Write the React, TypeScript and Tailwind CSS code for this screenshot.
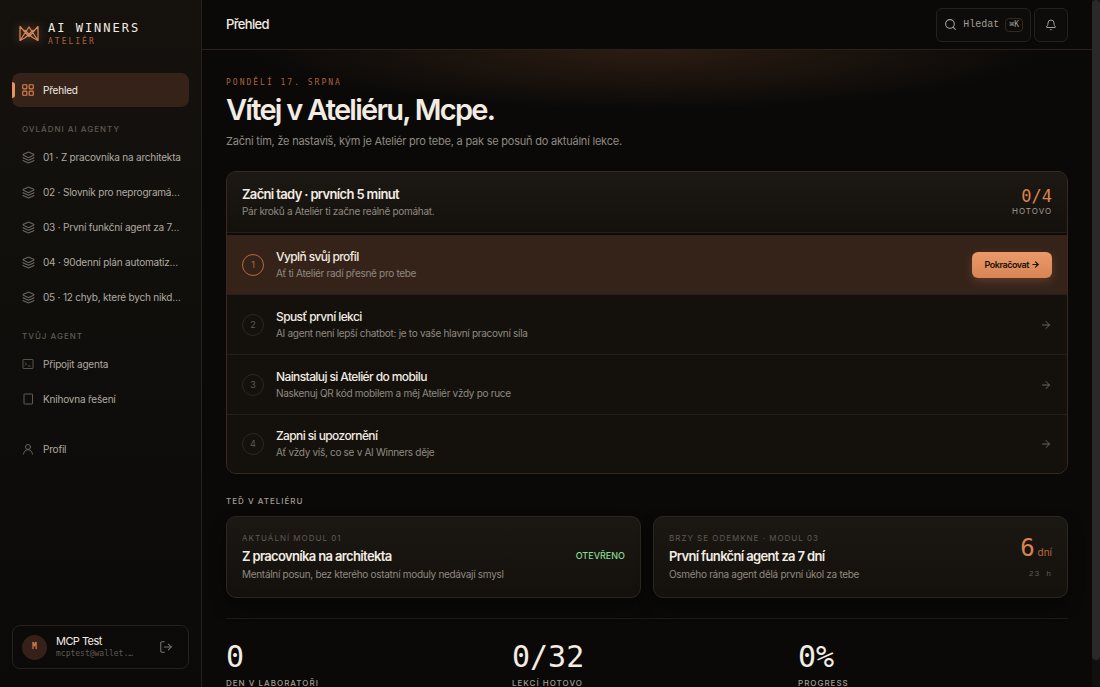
import React from "react";
import { ArrowRight, Bell, Layers, LayoutGrid, LogOut, Search } from "lucide-react";

const MONO = "font-['DejaVu_Sans_Mono',monospace]";

interface NavItemProps {
  label: string;
  icon: React.ReactNode;
  active?: boolean;
}

interface Step {
  title: string;
  text: string;
}

const modules = [
  "01 · Z pracovníka na architekta",
  "02 · Slovník pro neprogramá…",
  "03 · První funkční agent za 7…",
  "04 · 90denní plán automatiz…",
  "05 · 12 chyb, které bych nikd…",
];

const steps: Step[] = [
  { title: "Vyplň svůj profil", text: "Ať ti Ateliér radí přesně pro tebe" },
  { title: "Spusť první lekci", text: "AI agent není lepší chatbot: je to vaše hlavní pracovní síla" },
  { title: "Nainstaluj si Ateliér do mobilu", text: "Naskenuj QR kód mobilem a měj Ateliér vždy po ruce" },
  { title: "Zapni si upozornění", text: "Ať vždy víš, co se v AI Winners děje" },
];

const stats = [
  { value: "0", label: "Den v laboratoři" },
  { value: "0/32", label: "Lekcí hotovo" },
  { value: "0%", label: "Progress" },
];

function Logo() {
  return (
    <svg
      viewBox="0 0 20 18"
      className="h-[18px] w-5 shrink-0 drop-shadow-[0_0_5px_rgba(224,138,90,0.5)]"
      fill="none"
      stroke="#d98a5c"
      strokeWidth="1.2"
      strokeLinejoin="round"
    >
      <path d="M1 1.500 V15.500 L10 2 L19 15.500 V1.500 L10 11.500 Z" />
      <path d="M1 15.500 L6.500 12.500 L14.500 5 M19 15.500 L13.500 12.500 L5.500 5" />
    </svg>
  );
}

function TerminalIcon() {
  return (
    <svg viewBox="0 0 24 24" className="size-3" fill="none" stroke="currentColor" strokeWidth="1.6">
      <rect x="2" y="3" width="20" height="18" rx="1" />
      <path d="M6 9l3 3-3 3M12 16h5" />
    </svg>
  );
}

function BookIcon() {
  return (
    <svg viewBox="0 0 24 24" className="size-3" fill="none" stroke="currentColor" strokeWidth="1.8">
      <rect x="4" y="2" width="17" height="20" rx="1" />
    </svg>
  );
}

function PersonIcon() {
  return (
    <svg viewBox="0 0 24 24" className="size-3" fill="none" stroke="currentColor" strokeWidth="2" strokeLinecap="round">
      <circle cx="12" cy="8" r="5" />
      <path d="M3 22c1-5 4-8.500 9-8.500s8 3.500 9 8.500" />
    </svg>
  );
}

function NavItem({ label, icon, active }: NavItemProps) {
  return (
    <a
      href="#"
      className={`relative flex h-[34px] items-center gap-2 rounded-lg px-[9px] ${
        active ? "bg-[#35231a] text-[#f3ece2]" : "text-[#b0aaa1]"
      }`}
    >
      {active && <span className="absolute left-0 top-[9px] h-4 w-[3px] rounded-r bg-[#e8935f]" />}
      <span className={`flex w-[14px] shrink-0 justify-center ${active ? "text-[#d9834f]" : "text-[#6b655e]"}`}>{icon}</span>
      <span className="whitespace-nowrap text-[10px] tracking-[-0.02em]">{label}</span>
    </a>
  );
}

function NavLabel({ children }: { children: React.ReactNode }) {
  return (
    <h2 className="px-[10px] text-[8px] leading-3 font-medium uppercase tracking-[1px] text-[#5f5a53]">{children}</h2>
  );
}

function Sidebar() {
  return (
    <aside className="flex w-[202px] shrink-0 flex-col border-r border-[#25211d] bg-linear-to-b from-[#15120e] to-[#0b0a09] px-3 pb-[18px] pt-5">
      <div className="flex items-center gap-[9px] pl-[7px]">
        <Logo />
        <div className={MONO}>
          <div className="text-[12px] leading-4 tracking-[2px] text-[#f3ece2]">AI WINNERS</div>
          <div className="text-[8px] leading-3 tracking-[2px] text-[#a8623c]">ATELIÉR</div>
        </div>
      </div>
      <nav className="mt-[25px] flex flex-col">
        <NavItem label="Přehled" active icon={<LayoutGrid className="size-[14px] shrink-0" strokeWidth={2} />} />
        <div className="mt-4">
          <NavLabel>Ovládni AI agenty</NavLabel>
        </div>
        <div className="mt-[5px] flex flex-col gap-px">
          {modules.map((label) => (
            <NavItem key={label} label={label} icon={<Layers className="size-[13px]" strokeWidth={2} />} />
          ))}
        </div>
        <div className="mt-4">
          <NavLabel>Tvůj agent</NavLabel>
        </div>
        <div className="mt-[5px] flex flex-col gap-px">
          <NavItem label="Připojit agenta" icon={<TerminalIcon />} />
          <NavItem label="Knihovna řešení" icon={<BookIcon />} />
        </div>
        <div className="mt-4">
          <NavItem label="Profil" icon={<PersonIcon />} />
        </div>
      </nav>
      <div className="mt-auto flex h-11 items-center gap-[9px] rounded-lg border border-[#25211d] px-[9px]">
        <div className={`flex size-[25px] shrink-0 items-center justify-center rounded-full bg-[#35211a] text-[8px] font-bold text-[#d9834f] ${MONO}`}>
          M
        </div>
        <div className="min-w-0 flex-1">
          <div className="text-[11px] leading-[14px] tracking-tighter text-[#f3ece2]">MCP Test</div>
          <div className={`whitespace-nowrap text-[8px] leading-3 text-[#5f5a53] ${MONO}`}>mcptest@wallet.…</div>
        </div>
        <button type="button" aria-label="Odhlásit" className="mr-[6px] text-[#7a746c]">
          <LogOut className="size-[14px]" strokeWidth={1.8} />
        </button>
      </div>
    </aside>
  );
}

function Header() {
  return (
    <header className="flex h-[50px] shrink-0 items-center justify-between border-b border-[#2b211a] px-6">
      <div className="text-[13px] font-medium tracking-tighter text-[#f3ece2]">Přehled</div>
      <div className="flex gap-[3px]">
        <button
          type="button"
          className="flex h-[34px] items-center gap-[6px] rounded-md border border-[#25211d] bg-[#0d0c0b] px-[7px] font-['Liberation_Mono',monospace] text-[10px] text-[#a39d95]"
        >
          <Search className="size-[13px]" strokeWidth={2} />
          Hledat
          <kbd className="rounded-sm border border-[#35281f] px-[3px] font-['DejaVu_Sans_Mono',monospace] text-[8px] leading-3">⌘K</kbd>
        </button>
        <button
          type="button"
          aria-label="Upozornění"
          className="flex size-[34px] items-center justify-center rounded-md border border-[#25211d] bg-[#0d0c0b] text-[#a39d95]"
        >
          <Bell className="size-3" strokeWidth={2} />
        </button>
      </div>
    </header>
  );
}

function StepRow({ step, index }: { step: Step; index: number }) {
  const current = index === 0;
  return (
    <li
      className={`flex h-[60px] items-center gap-3 border-b border-[#241f1a] px-[15px] last:h-[58px] last:border-b-0 ${
        current ? "bg-[#35231a]" : "bg-[#14110d]"
      }`}
    >
      <span
        className={`flex size-[22px] shrink-0 items-center justify-center rounded-full border text-[9px] ${
          current ? "border-[#b8693f] text-[#b8693f]" : "border-[#2b2722] text-[#5f5a53]"
        }`}
      >
        {index + 1}
      </span>
      <div className="flex-1">
        <h3 className="text-[12px] leading-4 font-medium tracking-tighter text-[#f3ece2]">{step.title}</h3>
        <p className="text-[10px] leading-4 tracking-[-0.03em] text-[#8f8980]">{step.text}</p>
      </div>
      {current ? (
        <button
          type="button"
          className="flex h-[26px] items-center gap-[2px] rounded-md bg-linear-to-b from-[#ea9a68] to-[#d98555] px-3 text-[9px] font-semibold tracking-tighter text-[#1a100a] shadow-[0_3px_8px_rgba(217,133,85,0.25)]"
        >
          Pokračovat
          <ArrowRight className="size-[9px]" strokeWidth={3} />
        </button>
      ) : (
        <ArrowRight className="size-3 text-[#6b655e]" strokeWidth={2} />
      )}
    </li>
  );
}

function Onboarding() {
  return (
    <section className="mt-[21px] overflow-hidden rounded-[10px] border border-[#3a291f] bg-[#14110d]">
      <div className="flex h-[61px] items-center justify-between border-b border-[#241f1a] bg-linear-to-b from-[#1c1814] to-[#14110d] px-[15px]">
        <div>
          <h2 className="text-[13px] leading-[18px] font-semibold tracking-tighter text-[#f3ece2]">Začni tady · prvních 5 minut</h2>
          <p className="text-[10px] leading-4 tracking-[-0.03em] text-[#8f8980]">Pár kroků a Ateliér ti začne reálně pomáhat.</p>
        </div>
        <div className="text-right">
          <div className={`text-[17px] leading-[18px] text-[#d9834f] ${MONO}`}>0/4</div>
          <div className="text-[8px] leading-3 tracking-[1px] text-[#a39d95]">HOTOVO</div>
        </div>
      </div>
      <ol className="border-t-2 border-[#0d0b09]">
        {steps.map((step, i) => (
          <StepRow key={step.title} step={step} index={i} />
        ))}
      </ol>
    </section>
  );
}

interface ModuleCardProps {
  label: string;
  title: string;
  text: string;
  children: React.ReactNode;
}

function ModuleCard({ label, title, text, children }: ModuleCardProps) {
  return (
    <article className="flex h-[82px] items-center justify-between rounded-[10px] border border-[#2b2722] bg-linear-to-b from-[#1b1814] to-[#14100b] px-[15px] pb-[2px] shadow-[0_8px_16px_rgba(0,0,0,0.4)]">
      <div>
        <div className="text-[8px] leading-4 uppercase tracking-[1px] text-[#5f5a53]">{label}</div>
        <h3 className="text-[13px] leading-5 font-semibold tracking-tighter text-[#f3ece2]">{title}</h3>
        <p className="text-[10px] leading-4 tracking-[-0.03em] text-[#8f8980]">{text}</p>
      </div>
      {children}
    </article>
  );
}

export default function App() {
  return (
    <div className="flex h-screen overflow-hidden bg-[#0a0908] font-['Inter',sans-serif] text-[#f3ece2]">
      <Sidebar />
      <div className="flex min-w-0 flex-1 flex-col">
        <Header />
        <main className="min-h-0 flex-1 overflow-hidden bg-[radial-gradient(ellipse_400px_60px_at_50%_0,rgba(150,90,50,0.24),transparent)] px-6 pt-[27px]">
          <div className={`text-[8px] leading-3 tracking-[2px] text-[#a8623c] ${MONO}`}>PONDĚLÍ 17. SRPNA</div>
          <h1 className="mt-[3px] text-[29px] leading-9 font-semibold tracking-[-0.06em]">Vítej v Ateliéru, Mcpe.</h1>
          <p className="mt-1 text-[11px] leading-[18px] tracking-[-0.02em] text-[#8f8980]">
            Začni tím, že nastavíš, kým je Ateliér pro tebe, a pak se posuň do aktuální lekce.
          </p>

          <Onboarding />

          <h2 className="mt-[21px] text-[8px] leading-3 font-medium tracking-[1px] text-[#a39d95]">TEĎ V ATELIÉRU</h2>
          <div className="mt-[9px] grid grid-cols-2 gap-3">
            <ModuleCard
              label="Aktuální modul 01"
              title="Z pracovníka na architekta"
              text="Mentální posun, bez kterého ostatní moduly nedávají smysl"
            >
              <span className="text-[9px] font-medium text-[#86d992]">OTEVŘENO</span>
            </ModuleCard>
            <ModuleCard
              label="Brzy se odemkne · Modul 03"
              title="První funkční agent za 7 dní"
              text="Osmého rána agent dělá první úkol za tebe"
            >
              <div className="pt-1 text-right">
                <div className="text-[10px] leading-7 text-[#b8693f]">
                  <span className={`text-[24px] text-[#d9834f] ${MONO}`}>6</span> dní
                </div>
                <div className="font-['Liberation_Mono',monospace] text-[8px] leading-4 tracking-[1px] text-[#5f5a53]">23 h</div>
              </div>
            </ModuleCard>
          </div>

          <dl className="mt-5 grid grid-cols-3 gap-4 border-t border-[#1d1a17] pt-5">
            {stats.map(({ value, label }) => (
              <div key={label} className="flex flex-col-reverse">
                <dt className="mt-[2px] text-[8px] leading-3 font-medium uppercase tracking-[1px] text-[#a39d95]">{label}</dt>
                <dd className={`text-[30px] leading-9 ${MONO}`}>{value}</dd>
              </div>
            ))}
          </dl>
        </main>
      </div>
      {/* scroll track */}
      <div className="flex w-2 shrink-0 flex-col bg-[#11100f]">
        <div className="h-[96%] rounded-full bg-[#2a2928]" />
      </div>
    </div>
  );
}
